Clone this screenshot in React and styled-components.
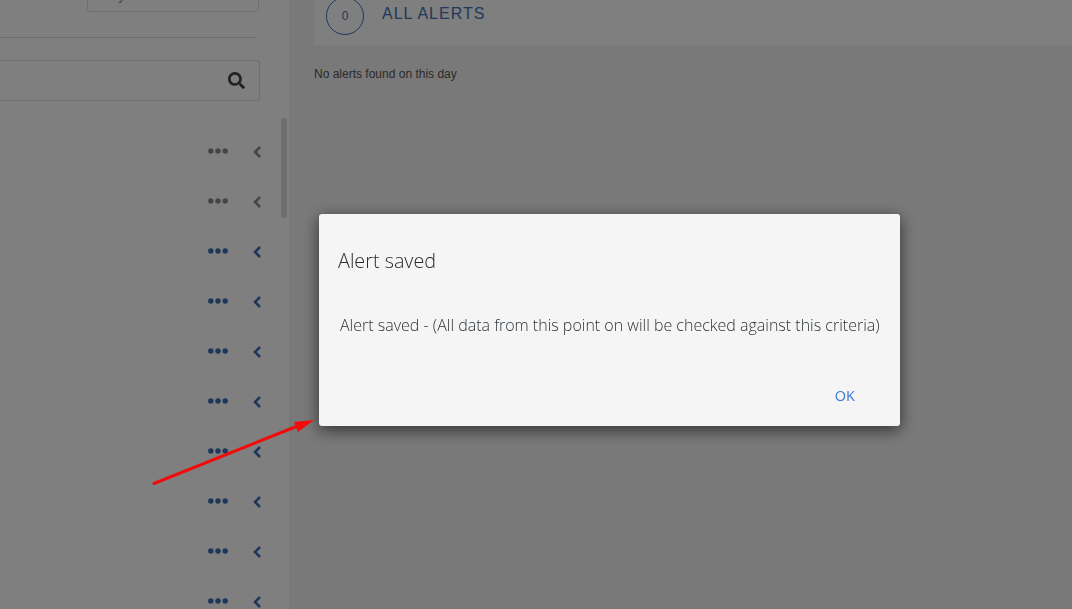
import React from 'react';
import styled, { createGlobalStyle } from 'styled-components';
import { FaSearch } from 'react-icons/fa';

const GlobalStyle = createGlobalStyle`
	html, body {
		margin: 0;
		height: 100%;
		overflow: hidden;
		font-family: 'Liberation Sans', Arial, sans-serif;
	}
`

const Page = styled.div`
	width: 100%;
	height: 100vh;
	display: flex;
	overflow: hidden;
	background: #f2f2f2;
`

const Sidebar = styled.aside`
	width: 289px;
	flex-shrink: 0;
	height: 100%;
	background: #ffffff;
	position: relative;
	overflow: hidden;
`

const SidebarInner = styled.div`
	margin-top: -30px;
	padding-right: 30px;
`

const DateInput = styled.div`
	margin-left: 87px;
	width: 170px;
	height: 40px;
	border: 1px solid #dcdfe3;
	border-radius: 3px;
	display: flex;
	align-items: flex-end;
	font-size: 14px;
	line-height: 14px;
	color: #8a8a8a;
`

const DateValue = styled.span`
	padding: 0 0 9px 0;
`

const Divider = styled.hr`
	margin: 25px 3px 0 0;
	border: none;
	border-top: 1px solid #d8d8dc;
`

const SearchBox = styled.div`
	margin-top: 22px;
	width: 260px;
	height: 41px;
	box-sizing: border-box;
	border: 1px solid #dcdfe6;
	border-left: none;
	border-radius: 0 3px 3px 0;
	display: flex;
	align-items: center;
	justify-content: flex-end;
	padding-right: 14px;
	color: #444;
	font-size: 17px;
`

const RowList = styled.div`
	margin-top: 26px;
`

const Row = styled.div`
	height: 50px;
	display: flex;
	align-items: center;
	justify-content: flex-end;
	gap: 25px;
	margin-right: -2px;
	color: ${({muted}) => muted ? '#8a8a8c' : '#3a6cb4'};
`

const Dots = styled.svg`
	margin-top: -2px;
`

const DotsIcon = () => (
	<Dots width="20" height="6" viewBox="0 0 20 6" fill="currentColor">
		<circle cx="2.8" cy="3" r="2.7" />
		<circle cx="10" cy="3" r="2.7" />
		<circle cx="17.2" cy="3" r="2.7" />
	</Dots>
);

const ChevronIcon = () => (
	<svg width="8" height="12" viewBox="0 0 8 12" fill="none" stroke="currentColor" strokeWidth="2.6">
		<path d="M7 1 L2 6 L7 11" />
	</svg>
);

const ScrollThumb = styled.div`
	position: absolute;
	top: 118px;
	right: 2px;
	width: 6px;
	height: 100px;
	border-radius: 3px;
	background: #dddddd;
`

const Main = styled.main`
	flex: 1;
	padding: 0 0 0 25px;
	overflow: hidden;
`

const AlertsHeader = styled.div`
	height: 45px;
	background: #ffffff;
	display: flex;
	align-items: flex-start;
	gap: 18px;
	padding-left: 12px;
`

const CountCircle = styled.div`
	width: 36px;
	height: 36px;
	margin-top: -3px;
	border: 1px solid #3f72ba;
	border-radius: 50%;
	display: flex;
	align-items: center;
	justify-content: center;
	font-size: 12px;
	color: #3f72ba;
`

const HeaderTitle = styled.h2`
	margin: 5px 0 0;
	font-size: 16px;
	font-weight: 400;
	letter-spacing: 1px;
	line-height: 18px;
	color: #4272b4;
`

const EmptyText = styled.p`
	margin: 22px 0 0;
	font-size: 12px;
	line-height: 14px;
	color: #555;
`

const Overlay = styled.div`
	position: fixed;
	inset: 0;
	background: rgba(0, 0, 0, 0.5);
`

const Modal = styled.div`
	position: fixed;
	left: 319px;
	top: 214px;
	width: 581px;
	height: 212px;
	box-sizing: border-box;
	padding: 35px 19px 0;
	background: #f5f5f5;
	border-radius: 3px;
	box-shadow: 0 4px 16px rgba(0, 0, 0, 0.6);
	font-family: 'Open Sans', sans-serif;
	display: flex;
	flex-direction: column;
`

const ModalTitle = styled.h3`
	margin: 0;
	font-size: 19.8px;
	font-weight: 300;
	line-height: 24px;
	color: #2a2a2a;
`

const ModalBody = styled.p`
	margin: 42px 0 0 2px;
	font-size: 16px;
	font-weight: 300;
	line-height: 20px;
	color: #2e3439;
	white-space: nowrap;
`

const ModalActions = styled.div`
	margin-top: auto;
	display: flex;
	justify-content: flex-end;
	padding: 0 26px 20px 0;
`

const OkButton = styled.button`
	border: none;
	background: none;
	padding: 0;
	font-family: inherit;
	font-size: 14.5px;
	line-height: 20px;
	color: #3a7bd0;
	cursor: pointer;
`

const ArrowSvg = styled.svg`
	position: fixed;
	left: 0;
	top: 0;
	pointer-events: none;
`

const rows = [true, true, false, false, false, false, false, false, false, false];

export default function App() {
	return (
		<>
			<GlobalStyle />
			<Page>
				<Sidebar>
					<SidebarInner>
						<DateInput><DateValue>Today</DateValue></DateInput>
						<Divider />
						<SearchBox><FaSearch /></SearchBox>
						<RowList>
							{rows.map((muted, i) => (
								<Row key={i} muted={muted}>
									<DotsIcon />
									<ChevronIcon />
								</Row>
							))}
						</RowList>
					</SidebarInner>
					<ScrollThumb />
				</Sidebar>
				<Main>
					<AlertsHeader>
						<CountCircle>0</CountCircle>
						<HeaderTitle>ALL ALERTS</HeaderTitle>
					</AlertsHeader>
					<EmptyText>No alerts found on this day</EmptyText>
				</Main>
			</Page>
			<Overlay />
			<Modal>
				<ModalTitle>Alert saved</ModalTitle>
				<ModalBody>Alert saved - (All data from this point on will be checked against this criteria)</ModalBody>
				<ModalActions>
					<OkButton>OK</OkButton>
				</ModalActions>
			</Modal>
			<ArrowSvg width="1072" height="609" viewBox="0 0 1072 609">
				<line x1="154" y1="483.5" x2="300" y2="425" stroke="#f40a0a" strokeWidth="3" strokeLinecap="round" />
				<polygon points="314,420 294,422 298,432" fill="#f40a0a" />
			</ArrowSvg>
		</>
	);
}
